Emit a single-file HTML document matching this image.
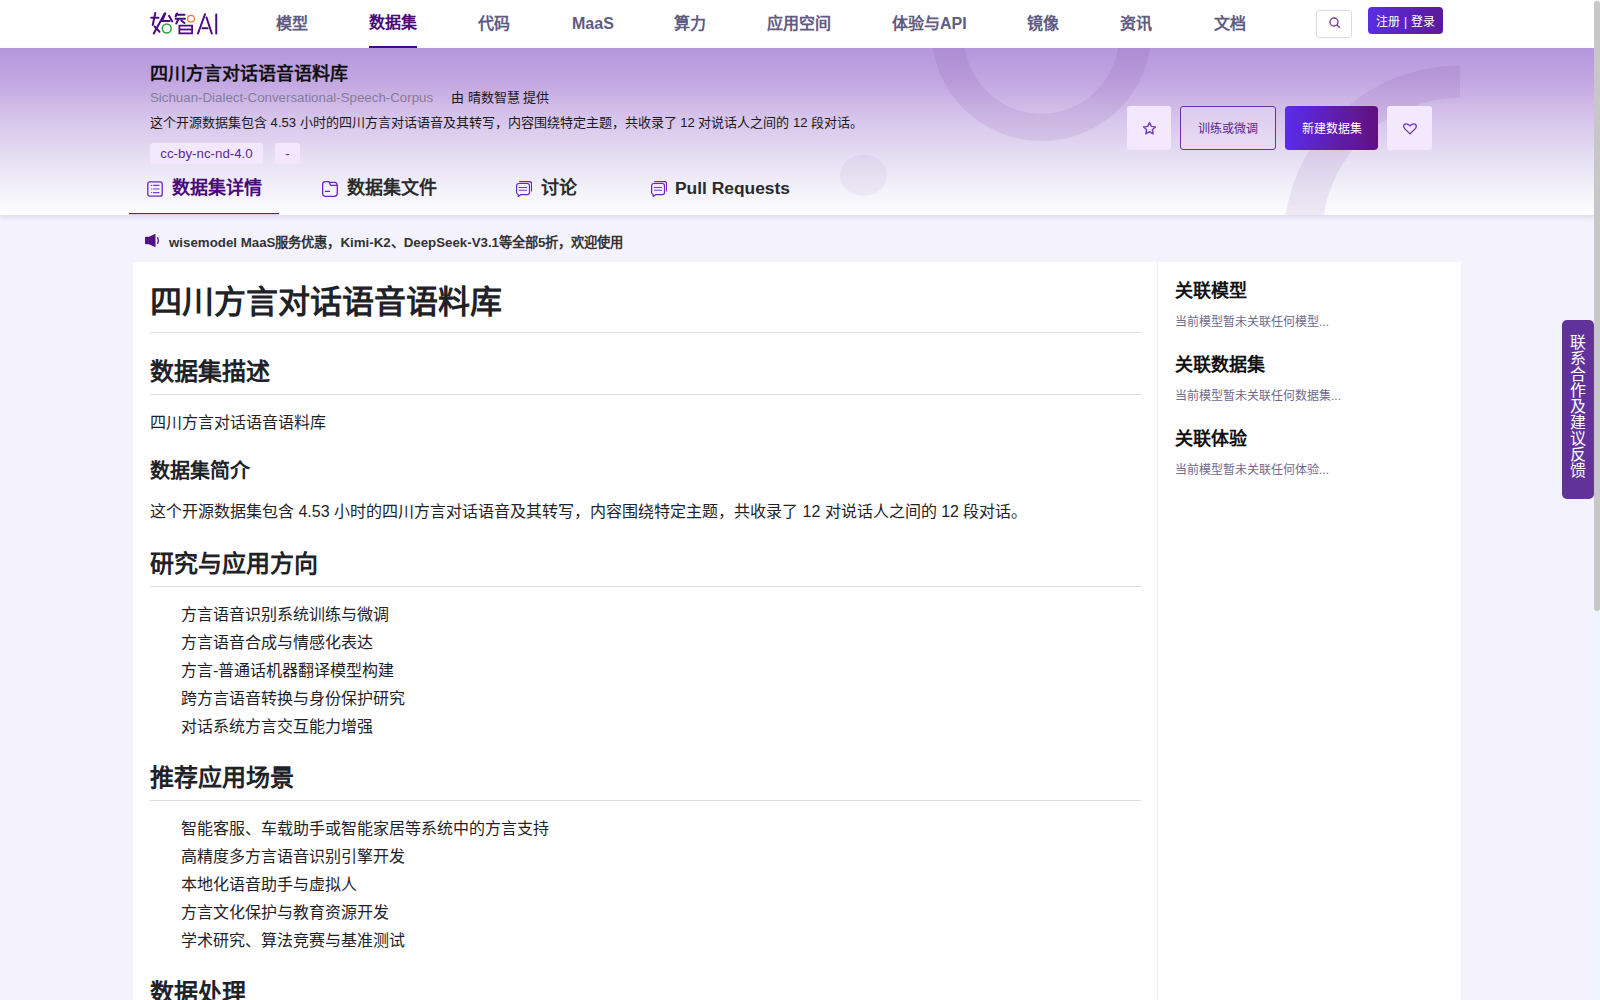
<!DOCTYPE html>
<html lang="zh-CN"><head><meta charset="utf-8">
<style>
*{box-sizing:border-box;margin:0;padding:0}
html,body{width:1600px;height:1000px;overflow:hidden}
body{font-family:"Liberation Sans",sans-serif;background:#f4f2fc;position:relative;color:#1f2328}
.abs{position:absolute;white-space:nowrap}
#hdr{position:absolute;left:0;top:0;width:1594px;height:48px;background:#fff}
.nav{position:absolute;top:15px;font-size:16px;font-weight:bold;color:#5f5b82;line-height:18px}
.nav.on{color:#4a0a7a;top:14px}
#navline{position:absolute;left:369px;top:46px;width:48px;height:2px;background:#4a0a7a}
#search{position:absolute;left:1316px;top:10px;width:36px;height:28px;border:1px solid #ddd7ea;border-radius:3px;background:#fff}
#login{position:absolute;left:1368px;top:7px;width:75px;height:27px;border-radius:4px;background:linear-gradient(90deg,#5a2de6,#5a1a98);color:#fff;font-size:12px;line-height:27px;text-align:center;padding-top:2px}
#banner{position:absolute;left:0;top:48px;width:1594px;height:167px;overflow:hidden;background:linear-gradient(180deg,#b597dc 0%,#c2a6e1 20%,#d5c2ea 40%,#dfd2ef 55%,#e9e4f5 70%,#f3f1fa 85%,#fdfdfe 100%);box-shadow:0 2px 5px rgba(60,40,100,.14)}
.deco{position:absolute;border-radius:50%}
#b-title{position:absolute;left:150px;top:16px;font-size:18px;font-weight:bold;color:#111;line-height:20px}
#b-sub{position:absolute;left:150px;top:42px;font-size:13.3px;color:#857d98;line-height:16px}
#b-by{position:absolute;left:451px;top:42px;font-size:13px;color:#1a1a1a;line-height:16px}
#b-desc{position:absolute;left:150px;top:67px;font-size:13.05px;color:#1a1a1a;line-height:16px}
.chip{position:absolute;top:95px;height:21px;border-radius:3px;background:#f2e7fc;color:#5a2a92;font-size:13.3px;line-height:21px;text-align:center}
.btn{position:absolute;top:58px;height:44px;border-radius:3px;font-size:12px;line-height:44px;text-align:center;padding-top:1px}
.tab{position:absolute;top:130px;font-size:18px;font-weight:bold;line-height:20px;color:#2a2a2a;white-space:nowrap}
.tab svg{position:absolute}
#tabline{position:absolute;left:129px;top:165px;width:150px;height:1px;background:#5b1f90;box-shadow:0 0.5px 0 rgba(91,31,144,.4)}
#notice{position:absolute;left:169px;top:235px;font-size:13.3px;font-weight:bold;color:#333;line-height:16px}
#main{position:absolute;left:133px;top:262px;width:1024px;height:800px;background:#fff;padding:20px 16px 0 17px}
#side{position:absolute;left:1158px;top:262px;width:303px;height:800px;background:#fff}
.md{font-size:16px;line-height:1.5;color:#1f2328}
.md h1{font-size:32px;line-height:1.25;font-weight:600;padding-bottom:.3em;border-bottom:1px solid #d8dee4;margin:0 0 16px}
.md h2{font-size:24px;line-height:1.25;font-weight:600;padding-bottom:.3em;border-bottom:1px solid #d8dee4;margin:24px 0 16px}
.md h3{font-size:20px;line-height:1.25;font-weight:600;margin:24px 0 16px}
.md p{margin:0 0 16px}
.md ul{margin:0 0 16px;padding-left:31px;list-style:none}
.md li+li{margin-top:4px}
.sh{position:absolute;left:17px;font-size:18px;font-weight:bold;color:#111;line-height:20px;margin-top:-1px}
.ss{position:absolute;left:17px;font-size:12px;color:#6e6a90;line-height:14px}
#feedback{position:absolute;left:1562px;top:320px;width:32px;height:179px;background:#61339a;border-radius:5px;color:#fff;font-size:16px;line-height:16px;text-align:center;padding-top:15px;word-break:break-all}
#sb-track{position:absolute;left:1594px;top:0;width:6px;height:1000px;background:#eef5fe}
#sb-thumb{position:absolute;left:1594px;top:1px;width:6px;height:610px;background:#c7c7c7;border-radius:3px}
</style></head><body>

<div id="hdr">
  <svg class="abs" style="left:145px;top:5px" width="80" height="35" viewBox="0 0 1600 700">
    <g stroke="#4b0a82" stroke-width="40" stroke-linecap="round" fill="none">
      <path d="M125 255 L270 255"/>
      <path d="M205 160 L155 400"/>
      <path d="M395 170 L175 570"/>
      <path d="M190 430 L290 535"/>
      <path d="M405 170 L340 320 L490 320"/>
      <path d="M480 215 L545 330"/>
      <path d="M640 170 L612 230"/>
      <path d="M625 195 L790 195"/>
      <path d="M612 275 L800 275"/>
      <path d="M665 290 L625 370"/>
      <path d="M725 310 L790 360"/>
      <path d="M1060 570 L1200 185"/>
      <path d="M1230 250 L1335 570"/>
      <path d="M1150 465 L1250 465"/>
      <path d="M1425 190 L1425 570"/>
    </g>
    <g stroke="#4b0a82" stroke-width="36" fill="none">
      <path d="M688 412 L942 412 L942 568 L688 568 Z"/>
      <path d="M700 490 L940 490"/>
    </g>
    <circle cx="435" cy="470" r="88" stroke="#22a832" stroke-width="30" fill="none"/>
    <circle cx="920" cy="275" r="68" stroke="#f27a32" stroke-width="24" fill="none"/>
  </svg>
  <div class="nav" style="left:276px">模型</div>
  <div class="nav on" style="left:369px">数据集</div>
  <div class="nav" style="left:478px">代码</div>
  <div class="nav" style="left:572px">MaaS</div>
  <div class="nav" style="left:674px">算力</div>
  <div class="nav" style="left:767px">应用空间</div>
  <div class="nav" style="left:892px">体验与API</div>
  <div class="nav" style="left:1027px">镜像</div>
  <div class="nav" style="left:1120px">资讯</div>
  <div class="nav" style="left:1214px">文档</div>
  <div id="navline"></div>
  <div id="search"><svg class="abs" style="left:11px;top:5px" width="14" height="14" viewBox="0 0 14 14"><circle cx="6" cy="6" r="4" stroke="#7b3f9e" stroke-width="1.4" fill="none"/><path d="M9 9 L11.5 11.5" stroke="#7b3f9e" stroke-width="1.4" stroke-linecap="round"/></svg></div>
  <div id="login">注册<span style="margin:0 4px 0 4px">|</span>登录</div>
</div>

<div id="banner">
  <svg class="abs" style="left:0;top:0" width="1594" height="167" viewBox="0 0 1594 167">
    <defs><clipPath id="cr"><rect x="0" y="0" width="1460" height="167"/></clipPath></defs>
    <path fill="rgba(90,30,140,.085)" fill-rule="evenodd" d="M931.6,-16.9 a110,110 0 1,0 220,0 a110,110 0 1,0 -220,0 Z M963.8,-11.8 a77.5,77.5 0 1,0 155,0 a77.5,77.5 0 1,0 -155,0 Z"/>
    <ellipse cx="863.5" cy="127.2" rx="23.5" ry="20.5" fill="rgba(90,30,140,.05)"/>
    <path clip-path="url(#cr)" fill="rgba(90,30,140,.085)" fill-rule="evenodd" d="M1283.6,194 a176.4,176.4 0 1,0 352.8,0 a176.4,176.4 0 1,0 -352.8,0 Z M1322.3,187.7 a137.7,137.7 0 1,0 275.4,0 a137.7,137.7 0 1,0 -275.4,0 Z"/>
  </svg>

  <div id="b-title">四川方言对话语音语料库</div>
  <div id="b-sub">Sichuan-Dialect-Conversational-Speech-Corpus</div>
  <div id="b-by">由 晴数智慧 提供</div>
  <div id="b-desc">这个开源数据集包含 4.53 小时的四川方言对话语音及其转写，内容围绕特定主题，共收录了 12 对说话人之间的 12 段对话。</div>
  <div class="chip" style="left:150px;width:113px">cc-by-nc-nd-4.0</div>
  <div class="chip" style="left:275px;width:25px">-</div>

  <div class="btn" style="left:1127px;width:44px;background:#f3e8fd">
    <svg class="abs" style="left:15px;top:15px" width="15" height="15" viewBox="0 0 24 24"><path d="M12 2.5l2.9 6.1 6.6.8-4.9 4.5 1.3 6.6L12 17.2l-5.9 3.3 1.3-6.6-4.9-4.5 6.6-.8z" fill="none" stroke="#7a45b8" stroke-width="2.4" stroke-linejoin="round"/></svg>
  </div>
  <div class="btn" style="left:1180px;width:96px;border:1px solid #6a2f98;background:rgba(240,230,250,.35);color:#5a1f8a;line-height:42px">训练或微调</div>
  <div class="btn" style="left:1285px;width:93px;background:linear-gradient(90deg,#5a2ceb,#62107e);color:#fff;border-radius:4px">新建数据集</div>
  <div class="btn" style="left:1387px;width:45px;background:#f3e8fd">
    <svg class="abs" style="left:16px;top:16.5px" width="14" height="12" viewBox="0 0 14 12"><path d="M7 10.9 L1.9 5.9 Q0.7 4.7 0.7 3.3 Q0.7 0.8 3.2 0.8 Q4.8 0.8 7 2.8 Q9.2 0.8 10.8 0.8 Q13.3 0.8 13.3 3.3 Q13.3 4.7 12.1 5.9 Z" fill="none" stroke="#6e34b2" stroke-width="1.3" stroke-linejoin="round"/></svg>
  </div>

  <div class="tab" style="left:147px;color:#4a0a7a">
    <svg style="left:0;top:3px" width="16" height="16" viewBox="0 0 16 16"><rect x="0.8" y="0.8" width="14.4" height="14.4" rx="2" fill="none" stroke="#6a24c2" stroke-width="1.3"/><path d="M4.4 4.4h.2M4.4 8h.2M4.4 11.6h.2M6.4 4.4h5.6M6.4 8h5.6M6.4 11.6h5.6" stroke="#7a3ccc" stroke-width="1.2" stroke-linecap="round"/></svg>
    <span style="position:absolute;left:25px;top:0">数据集详情</span>
  </div>
  <div class="tab" style="left:322px">
    <svg style="left:0;top:3px" width="16" height="16" viewBox="0 0 16 16"><path d="M0.6 3.6 Q0.6 0.6 3.6 0.6 L6.9 0.6 L8.6 4.3 L15.3 4.3 L15.3 12.3 Q15.3 15.3 12.3 15.3 L3.6 15.3 Q0.6 15.3 0.6 12.3 Z" fill="none" stroke="#6a24c2" stroke-width="1.3" stroke-linejoin="round"/><path d="M7.4 1.4 L13 1.4 Q14.8 1.6 15.3 4.3" fill="none" stroke="#6a24c2" stroke-width="1.3"/><path d="M3.4 10.4h4.1" stroke="#6a24c2" stroke-width="1.2" stroke-linecap="round"/></svg>
    <span style="position:absolute;left:25px;top:0">数据集文件</span>
  </div>
  <div class="tab" style="left:516px">
    <svg style="left:0;top:3px" width="16" height="16" viewBox="0 0 16 16"><path d="M3.2 0.6 L13.5 0.6 Q15.6 0.6 15.6 2.7 L15.6 10.5" fill="none" stroke="#6a24c2" stroke-width="1.2"/><path d="M2.7 2.5 L11.3 2.5 Q13.5 2.5 13.5 4.7 L13.5 11.5 Q13.5 13.7 11.3 13.7 L4.6 13.7 L2.2 15.4 L2.2 13.5 Q0.6 13 0.6 11.5 L0.6 4.7 Q0.6 2.5 2.7 2.5 Z" fill="none" stroke="#6a24c2" stroke-width="1.2" stroke-linejoin="round"/><path d="M2.8 6.5h8.2M2.8 9.3h8.2" stroke="#7a3ccc" stroke-width="1.1"/></svg>
    <span style="position:absolute;left:25px;top:0">讨论</span>
  </div>
  <div class="tab" style="left:651px">
    <svg style="left:0;top:3px" width="16" height="16" viewBox="0 0 16 16"><path d="M3.2 0.6 L13.5 0.6 Q15.6 0.6 15.6 2.7 L15.6 10.5" fill="none" stroke="#6a24c2" stroke-width="1.2"/><path d="M2.7 2.5 L11.3 2.5 Q13.5 2.5 13.5 4.7 L13.5 11.5 Q13.5 13.7 11.3 13.7 L4.6 13.7 L2.2 15.4 L2.2 13.5 Q0.6 13 0.6 11.5 L0.6 4.7 Q0.6 2.5 2.7 2.5 Z" fill="none" stroke="#6a24c2" stroke-width="1.2" stroke-linejoin="round"/><path d="M2.8 6.5h8.2M2.8 9.3h8.2" stroke="#7a3ccc" stroke-width="1.1"/></svg>
    <span style="position:absolute;left:24px;top:0;font-size:17.4px">Pull Requests</span>
  </div>
  <div id="tabline"></div>
</div>

<svg class="abs" style="left:144px;top:233px" width="16" height="15" viewBox="0 0 16 15"><path d="M1 4.5 Q1 3.8 1.8 3.8 L5 3.8 L11.5 0.8 L11.5 14.2 L5 11.2 L1.8 11.2 Q1 11.2 1 10.5 Z" fill="#541088"/><path d="M13.6 4.2 Q15 7.5 13.6 10.8" stroke="#541088" stroke-width="1.3" fill="none"/></svg>
<div id="notice">wisemodel MaaS服务优惠，Kimi-K2、DeepSeek-V3.1等全部5折，欢迎使用</div>

<div id="main" class="md">
  <h1>四川方言对话语音语料库</h1>
  <h2>数据集描述</h2>
  <p>四川方言对话语音语料库</p>
  <h3>数据集简介</h3>
  <p>这个开源数据集包含 4.53 小时的四川方言对话语音及其转写，内容围绕特定主题，共收录了 12 对说话人之间的 12 段对话。</p>
  <h2 style="margin-top:25px">研究与应用方向</h2>
  <ul>
    <li>方言语音识别系统训练与微调</li>
    <li>方言语音合成与情感化表达</li>
    <li>方言-普通话机器翻译模型构建</li>
    <li>跨方言语音转换与身份保护研究</li>
    <li>对话系统方言交互能力增强</li>
  </ul>
  <h2>推荐应用场景</h2>
  <ul>
    <li>智能客服、车载助手或智能家居等系统中的方言支持</li>
    <li>高精度多方言语音识别引擎开发</li>
    <li>本地化语音助手与虚拟人</li>
    <li>方言文化保护与教育资源开发</li>
    <li>学术研究、算法竞赛与基准测试</li>
  </ul>
  <h2 style="margin-top:25px">数据处理</h2>
</div>

<div class="abs" style="left:1157px;top:262px;width:1px;height:800px;background:#f3e8fd"></div>
<div id="side">
  <div class="sh" style="top:20px">关联模型</div>
  <div class="ss" style="top:53px">当前模型暂未关联任何模型...</div>
  <div class="sh" style="top:94px">关联数据集</div>
  <div class="ss" style="top:127px">当前模型暂未关联任何数据集...</div>
  <div class="sh" style="top:168px">关联体验</div>
  <div class="ss" style="top:201px">当前模型暂未关联任何体验...</div>
</div>

<div id="feedback">联<br>系<br>合<br>作<br>及<br>建<br>议<br>反<br>馈</div>
<div id="sb-track"></div>
<div id="sb-thumb"></div>
</body></html>
